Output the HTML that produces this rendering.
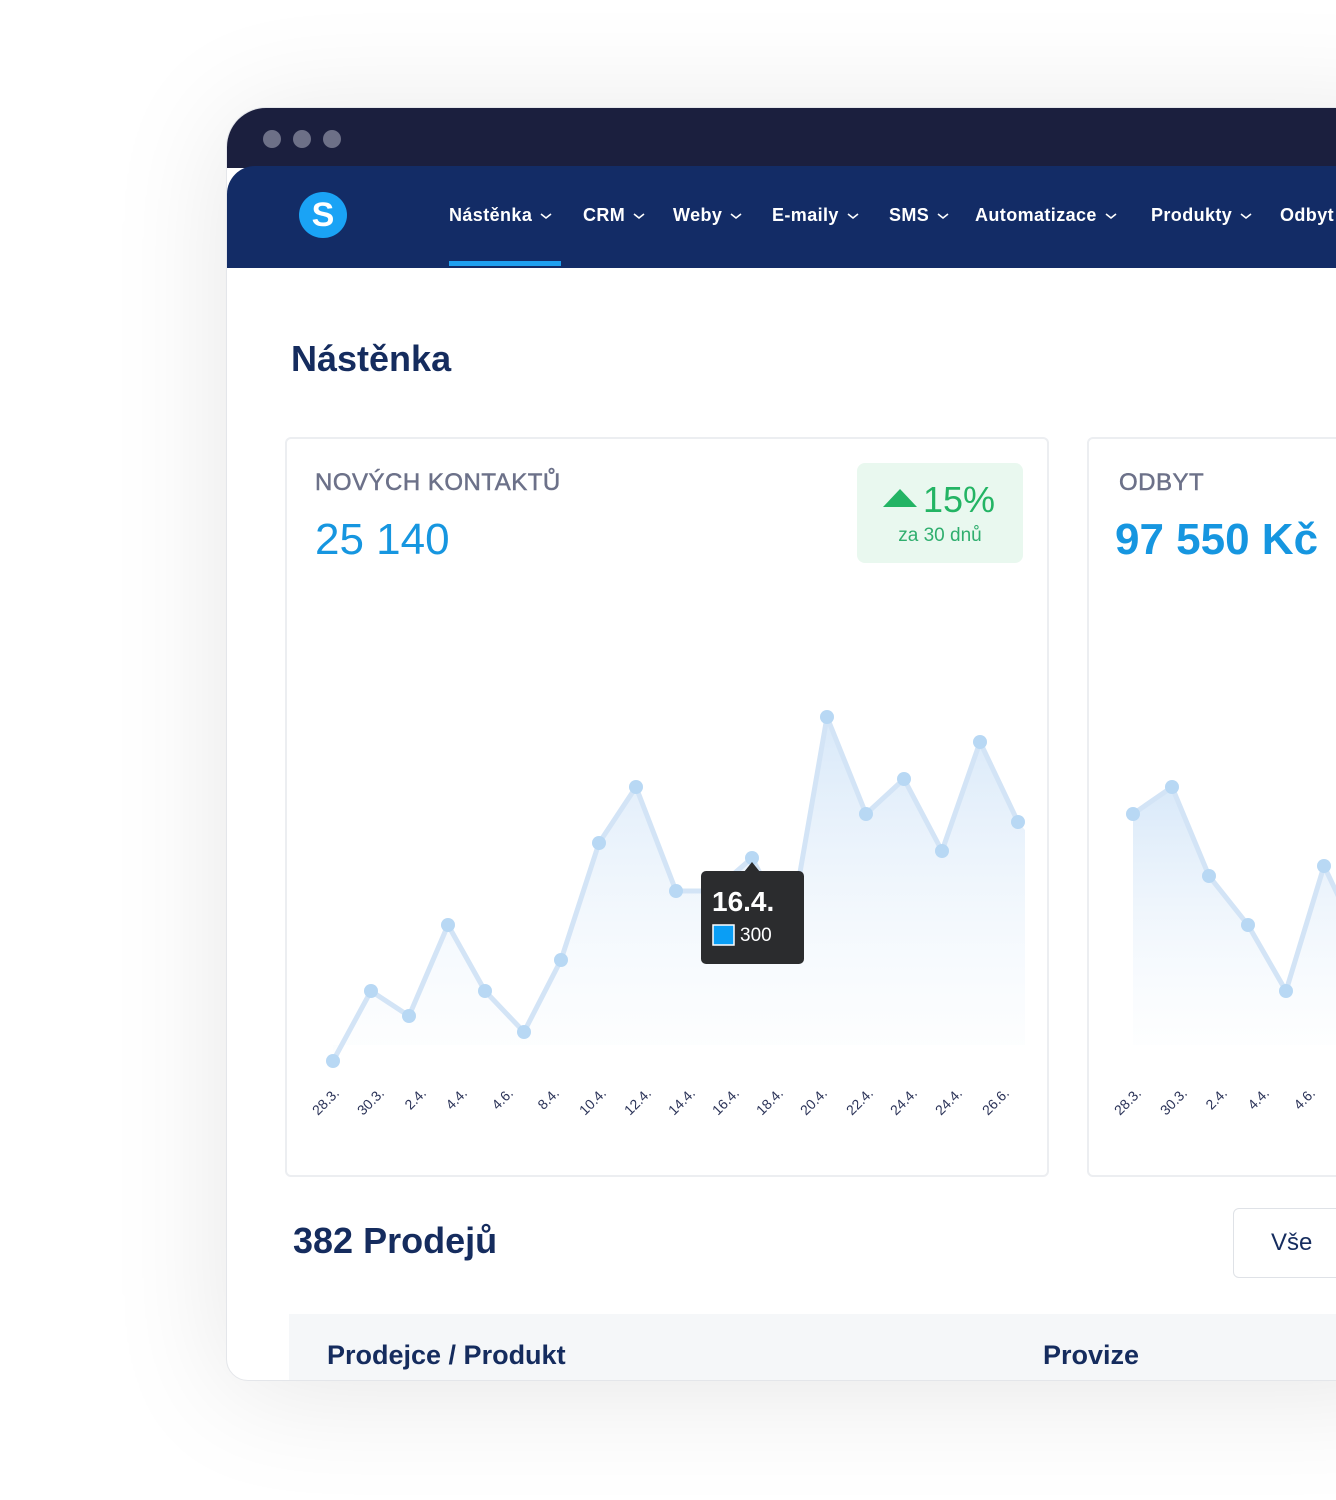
<!DOCTYPE html>
<html><head><meta charset="utf-8"><style>
*{margin:0;padding:0;box-sizing:border-box}
body{width:1336px;height:1500px;background:#fff;position:relative;overflow:hidden;font-family:"Liberation Sans","DejaVu Sans",sans-serif}
.win{position:absolute;left:226px;top:107px;width:1200px;height:1274px;border-radius:40px 0 0 22px;background:#fff;overflow:hidden;box-shadow:0 10px 120px rgba(0,0,0,0.10);border:1px solid #e4e6ea}
.title{position:absolute;left:0;top:0;width:100%;height:60px;background:#1b1f3e}
.dot{position:absolute;top:22px;width:18px;height:18px;border-radius:50%;background:#6d7087}
.nav{position:absolute;left:0;top:58px;width:100%;height:102px;background:#132c66;border-radius:28px 0 0 0}
.logo{position:absolute;left:72px;top:26px;width:48px;height:46px;border-radius:50%;background:#1aa3f5;color:#fff;font-weight:bold;font-size:34px;text-align:center;line-height:46px}
.ni{position:absolute;top:39px;color:#fff;font-weight:bold;font-size:18px;white-space:nowrap;letter-spacing:0.4px}
.ni svg{margin-left:8px;vertical-align:middle}
.ul{position:absolute;left:222px;top:95px;width:112px;height:5px;background:#1ea0f0}
h1{position:absolute;left:64px;top:230px;font-size:36px;color:#152c5e;font-weight:bold}
.card{position:absolute;top:329px;height:740px;border:2px solid #eceef1;border-radius:6px;background:#fff}
.lab{position:absolute;font-size:24px;color:#6c7189;letter-spacing:0.5px;-webkit-text-stroke:0.5px #6c7189}
.big{position:absolute;font-size:44px;color:#1696e0}
.badge{position:absolute;left:570px;top:24px;width:166px;height:100px;background:#e9f8ef;border-radius:8px;text-align:center}
</style></head><body>
<div class="win">
 <div class="title"><div class="dot" style="left:36px"></div><div class="dot" style="left:66px"></div><div class="dot" style="left:96px"></div></div>
 <div class="nav">
  <div class="logo">S</div>
  <div class="ni" style="left:222px">Nástěnka<svg width="12" height="8"><path d="M1 2l5 4 5-4" stroke="#fff" stroke-width="1.6" fill="none"/></svg></div>
  <div class="ni" style="left:356px">CRM<svg width="12" height="8"><path d="M1 2l5 4 5-4" stroke="#fff" stroke-width="1.6" fill="none"/></svg></div>
  <div class="ni" style="left:446px">Weby<svg width="12" height="8"><path d="M1 2l5 4 5-4" stroke="#fff" stroke-width="1.6" fill="none"/></svg></div>
  <div class="ni" style="left:545px">E-maily<svg width="12" height="8"><path d="M1 2l5 4 5-4" stroke="#fff" stroke-width="1.6" fill="none"/></svg></div>
  <div class="ni" style="left:662px">SMS<svg width="12" height="8"><path d="M1 2l5 4 5-4" stroke="#fff" stroke-width="1.6" fill="none"/></svg></div>
  <div class="ni" style="left:748px">Automatizace<svg width="12" height="8"><path d="M1 2l5 4 5-4" stroke="#fff" stroke-width="1.6" fill="none"/></svg></div>
  <div class="ni" style="left:924px">Produkty<svg width="12" height="8"><path d="M1 2l5 4 5-4" stroke="#fff" stroke-width="1.6" fill="none"/></svg></div>
  <div class="ni" style="left:1053px">Odbyt</div>
  <div class="ul"></div>
 </div>
 <h1>Nástěnka</h1>
 <div class="card" style="left:58px;width:764px">
  <div class="lab" style="left:28px;top:30px">NOVÝCH KONTAKTŮ</div>
  <div class="big" style="left:28px;top:76px">25 140</div>
  <div class="badge">
   <svg style="position:absolute;left:26px;top:25px" width="34" height="20"><polygon points="0,19 17,1 34,19" fill="#23b464"/></svg>
   <div style="position:absolute;left:66px;top:16px;color:#23b464;font-size:36px">15%</div>
   <div style="position:absolute;left:0;width:100%;top:62px;color:#2fae6e;font-size:19px">za 30 dnů</div></div>
 </div>
 <div class="card" style="left:860px;width:400px">
  <div class="lab" style="left:30px;top:30px">ODBYT</div>
  <div class="big" style="left:26px;top:76px;font-weight:bold">97 550 Kč</div>
 </div>
 <div style="position:absolute;left:66px;top:1112px;font-size:36px;font-weight:bold;color:#152c5e">382 Prodejů</div>
 <div style="position:absolute;left:1006px;top:1100px;width:120px;height:70px;border:1px solid #dfe2e7;border-radius:6px;font-size:24px;color:#152c5e;padding:20px 0 0 37px">Vše</div>
 <div style="position:absolute;left:62px;top:1206px;width:1200px;height:80px;background:#f5f7f9"></div>
 <div style="position:absolute;left:100px;top:1232px;font-size:27px;color:#152c5e;font-weight:bold">Prodejce / Produkt</div>
 <div style="position:absolute;left:816px;top:1232px;font-size:27px;color:#152c5e;font-weight:bold">Provize</div>
</div>
<svg style="position:absolute;left:0;top:0" width="1336" height="1500">
<defs><linearGradient id="g" x1="0" y1="0" x2="0" y2="1"><stop offset="0" stop-color="#d4e6f8" stop-opacity="0.9"/><stop offset="1" stop-color="#eef5fc" stop-opacity="0.1"/></linearGradient>
<clipPath id="c"><rect x="227" y="270" width="1109" height="1110"/></clipPath></defs>
<g clip-path="url(#c)">
<polygon fill="url(#g)" points="333,1061 371,991 409,1016 448,925 485,991 524,1032 561,960 599,843 636,787 676,891 714,891 752,858 790,930 827,717 866,814 904,779 942,851 980,742 1018,822 1025,830 1025,1045 333,1045"/>
<polyline fill="none" stroke="#d3e4f6" stroke-width="5" stroke-linejoin="round" points="333,1061 371,991 409,1016 448,925 485,991 524,1032 561,960 599,843 636,787 676,891 714,891 752,858 790,930 827,717 866,814 904,779 942,851 980,742 1018,822"/>
<g fill="#b8d8f4"><circle cx="333" cy="1061" r="7"/><circle cx="371" cy="991" r="7"/><circle cx="409" cy="1016" r="7"/><circle cx="448" cy="925" r="7"/><circle cx="485" cy="991" r="7"/><circle cx="524" cy="1032" r="7"/><circle cx="561" cy="960" r="7"/><circle cx="599" cy="843" r="7"/><circle cx="636" cy="787" r="7"/><circle cx="676" cy="891" r="7"/><circle cx="752" cy="858" r="7"/><circle cx="827" cy="717" r="7"/><circle cx="866" cy="814" r="7"/><circle cx="904" cy="779" r="7"/><circle cx="942" cy="851" r="7"/><circle cx="980" cy="742" r="7"/><circle cx="1018" cy="822" r="7"/></g>
<polygon fill="url(#g)" points="1133,814 1172,787 1209,876 1248,925 1286,991 1324,866 1345,910 1345,1045 1133,1045"/>
<polyline fill="none" stroke="#d3e4f6" stroke-width="5" stroke-linejoin="round" points="1133,814 1172,787 1209,876 1248,925 1286,991 1324,866 1345,910"/>
<g fill="#b8d8f4"><circle cx="1133" cy="814" r="7"/><circle cx="1172" cy="787" r="7"/><circle cx="1209" cy="876" r="7"/><circle cx="1248" cy="925" r="7"/><circle cx="1286" cy="991" r="7"/><circle cx="1324" cy="866" r="7"/></g>
<g font-size="14" fill="#2b3358" text-anchor="end" font-family="Liberation Sans,sans-serif">
<text transform="translate(340,1094) rotate(-45)">28.3.</text><text transform="translate(385,1094) rotate(-45)">30.3.</text><text transform="translate(427,1094) rotate(-45)">2.4.</text><text transform="translate(468,1094) rotate(-45)">4.4.</text><text transform="translate(514,1094) rotate(-45)">4.6.</text><text transform="translate(560,1094) rotate(-45)">8.4.</text><text transform="translate(607,1094) rotate(-45)">10.4.</text><text transform="translate(652,1094) rotate(-45)">12.4.</text><text transform="translate(696,1094) rotate(-45)">14.4.</text><text transform="translate(740,1094) rotate(-45)">16.4.</text><text transform="translate(784,1094) rotate(-45)">18.4.</text><text transform="translate(828,1094) rotate(-45)">20.4.</text><text transform="translate(874,1094) rotate(-45)">22.4.</text><text transform="translate(918,1094) rotate(-45)">24.4.</text><text transform="translate(963,1094) rotate(-45)">24.4.</text><text transform="translate(1010,1094) rotate(-45)">26.6.</text>
<text transform="translate(1142,1094) rotate(-45)">28.3.</text><text transform="translate(1188,1094) rotate(-45)">30.3.</text><text transform="translate(1228,1094) rotate(-45)">2.4.</text><text transform="translate(1270,1094) rotate(-45)">4.4.</text><text transform="translate(1316,1094) rotate(-45)">4.6.</text>
</g>
<rect x="701" y="871" width="103" height="93" rx="5" fill="#2b2c2e"/>
<polygon points="744,872 752,862 760,872" fill="#2b2c2e"/>
<text x="712" y="911" fill="#fff" font-size="28" font-weight="bold" font-family="Liberation Sans,sans-serif">16.4.</text>
<rect x="713" y="925" width="21" height="20" fill="#0a9ef5" stroke="#fff" stroke-width="1.5"/>
<text x="740" y="941" fill="#fff" font-size="19" font-family="Liberation Sans,sans-serif">300</text>
</g>
</svg>
</body></html>
